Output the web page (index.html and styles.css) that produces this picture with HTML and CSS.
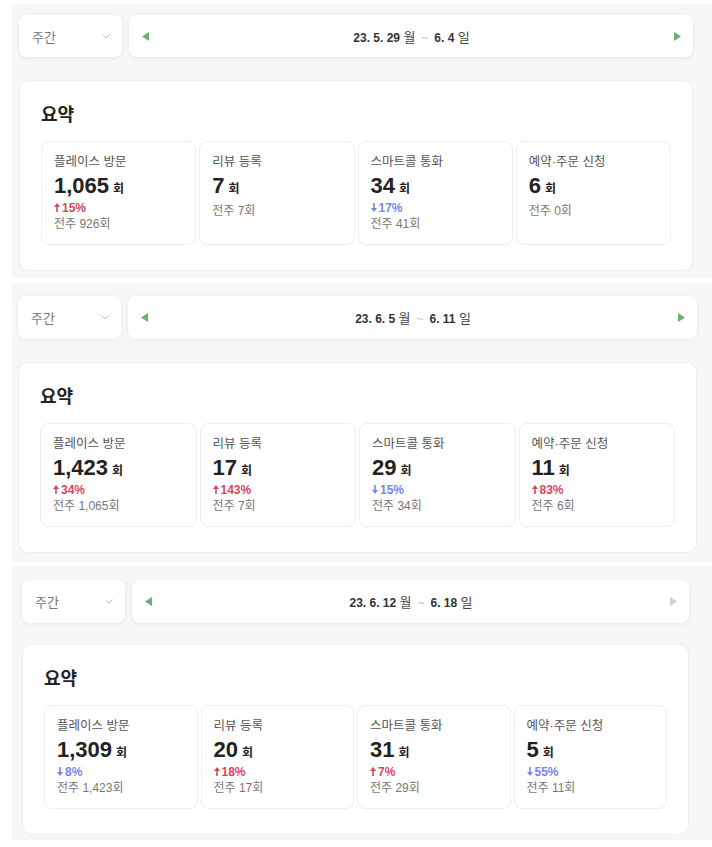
FILE: index.html
```html
<!DOCTYPE html>
<html lang="ko">
<head>
    <meta charset="UTF-8">
    <meta name="viewport" content="width=device-width, initial-scale=1.0">
    <title>주간 요약</title>
    <link rel="stylesheet" href="styles.css">
</head>
<body>
    <!-- 5/29 ~ 6/4 -->
    <section class="week">
        <div class="toolbar">
            <div class="period-select">
                <span>주간</span>
                <svg class="chevron" width="8" height="5" viewBox="0 0 8 5"><polyline points="0.5,0.5 4,4 7.5,0.5" /></svg>
            </div>
            <div class="date-nav">
                <svg class="nav-arrow" width="7" height="9" viewBox="0 0 7 9"><polygon points="7,0 7,9 0,4.5" /></svg>
                <div class="date-range"><b>23. 5. 29</b> <span class="dow">월</span><span class="tilde">~</span><b>6. 4</b> <span class="dow">일</span></div>
                <svg class="nav-arrow" width="7" height="9" viewBox="0 0 7 9"><polygon points="0,0 0,9 7,4.5" /></svg>
            </div>
        </div>
        <div class="summary">
            <h2>요약</h2>
            <div class="stats">
                <div class="stat">
                    <div class="label">플레이스 방문</div>
                    <div class="value">1,065<small>회</small></div>
                    <div class="change up"><svg width="6" height="9" viewBox="0 0 6 9"><polygon points="3,0 6,4 3.8,4 3.8,9 2.2,9 2.2,4 0,4" /></svg>15%</div>
                    <div class="prev">전주 926회</div>
                </div>
                <div class="stat">
                    <div class="label">리뷰 등록</div>
                    <div class="value">7<small>회</small></div>
                    <div class="prev">전주 7회</div>
                </div>
                <div class="stat">
                    <div class="label">스마트콜 통화</div>
                    <div class="value">34<small>회</small></div>
                    <div class="change down"><svg width="6" height="9" viewBox="0 0 6 9"><polygon points="3,9 6,5 3.8,5 3.8,0 2.2,0 2.2,5 0,5" /></svg>17%</div>
                    <div class="prev">전주 41회</div>
                </div>
                <div class="stat">
                    <div class="label">예약·주문 신청</div>
                    <div class="value">6<small>회</small></div>
                    <div class="prev">전주 0회</div>
                </div>
            </div>
        </div>
    </section>

    <!-- 6/5 ~ 6/11 -->
    <section class="week week-b">
        <div class="toolbar">
            <div class="period-select">
                <span>주간</span>
                <svg class="chevron" width="8" height="5" viewBox="0 0 8 5"><polyline points="0.5,0.5 4,4 7.5,0.5" /></svg>
            </div>
            <div class="date-nav">
                <svg class="nav-arrow" width="7" height="9" viewBox="0 0 7 9"><polygon points="7,0 7,9 0,4.5" /></svg>
                <div class="date-range"><b>23. 6. 5</b> <span class="dow">월</span><span class="tilde">~</span><b>6. 11</b> <span class="dow">일</span></div>
                <svg class="nav-arrow" width="7" height="9" viewBox="0 0 7 9"><polygon points="0,0 0,9 7,4.5" /></svg>
            </div>
        </div>
        <div class="summary">
            <h2>요약</h2>
            <div class="stats">
                <div class="stat">
                    <div class="label">플레이스 방문</div>
                    <div class="value">1,423<small>회</small></div>
                    <div class="change up"><svg width="6" height="9" viewBox="0 0 6 9"><polygon points="3,0 6,4 3.8,4 3.8,9 2.2,9 2.2,4 0,4" /></svg>34%</div>
                    <div class="prev">전주 1,065회</div>
                </div>
                <div class="stat">
                    <div class="label">리뷰 등록</div>
                    <div class="value">17<small>회</small></div>
                    <div class="change up"><svg width="6" height="9" viewBox="0 0 6 9"><polygon points="3,0 6,4 3.8,4 3.8,9 2.2,9 2.2,4 0,4" /></svg>143%</div>
                    <div class="prev">전주 7회</div>
                </div>
                <div class="stat">
                    <div class="label">스마트콜 통화</div>
                    <div class="value">29<small>회</small></div>
                    <div class="change down"><svg width="6" height="9" viewBox="0 0 6 9"><polygon points="3,9 6,5 3.8,5 3.8,0 2.2,0 2.2,5 0,5" /></svg>15%</div>
                    <div class="prev">전주 34회</div>
                </div>
                <div class="stat">
                    <div class="label">예약·주문 신청</div>
                    <div class="value">11<small>회</small></div>
                    <div class="change up"><svg width="6" height="9" viewBox="0 0 6 9"><polygon points="3,0 6,4 3.8,4 3.8,9 2.2,9 2.2,4 0,4" /></svg>83%</div>
                    <div class="prev">전주 6회</div>
                </div>
            </div>
        </div>
    </section>

    <!-- 6/12 ~ 6/18 (이번 주, 다음 버튼 비활성) -->
    <section class="week week-c">
        <div class="toolbar">
            <div class="period-select">
                <span>주간</span>
                <svg class="chevron" width="8" height="5" viewBox="0 0 8 5"><polyline points="0.5,0.5 4,4 7.5,0.5" /></svg>
            </div>
            <div class="date-nav">
                <svg class="nav-arrow" width="7" height="9" viewBox="0 0 7 9"><polygon points="7,0 7,9 0,4.5" /></svg>
                <div class="date-range"><b>23. 6. 12</b> <span class="dow">월</span><span class="tilde">~</span><b>6. 18</b> <span class="dow">일</span></div>
                <svg class="nav-arrow disabled" width="7" height="9" viewBox="0 0 7 9"><polygon points="0,0 0,9 7,4.5" /></svg>
            </div>
        </div>
        <div class="summary">
            <h2>요약</h2>
            <div class="stats">
                <div class="stat">
                    <div class="label">플레이스 방문</div>
                    <div class="value">1,309<small>회</small></div>
                    <div class="change down"><svg width="6" height="9" viewBox="0 0 6 9"><polygon points="3,9 6,5 3.8,5 3.8,0 2.2,0 2.2,5 0,5" /></svg>8%</div>
                    <div class="prev">전주 1,423회</div>
                </div>
                <div class="stat">
                    <div class="label">리뷰 등록</div>
                    <div class="value">20<small>회</small></div>
                    <div class="change up"><svg width="6" height="9" viewBox="0 0 6 9"><polygon points="3,0 6,4 3.8,4 3.8,9 2.2,9 2.2,4 0,4" /></svg>18%</div>
                    <div class="prev">전주 17회</div>
                </div>
                <div class="stat">
                    <div class="label">스마트콜 통화</div>
                    <div class="value">31<small>회</small></div>
                    <div class="change up"><svg width="6" height="9" viewBox="0 0 6 9"><polygon points="3,0 6,4 3.8,4 3.8,9 2.2,9 2.2,4 0,4" /></svg>7%</div>
                    <div class="prev">전주 29회</div>
                </div>
                <div class="stat">
                    <div class="label">예약·주문 신청</div>
                    <div class="value">5<small>회</small></div>
                    <div class="change down"><svg width="6" height="9" viewBox="0 0 6 9"><polygon points="3,9 6,5 3.8,5 3.8,0 2.2,0 2.2,5 0,5" /></svg>55%</div>
                    <div class="prev">전주 11회</div>
                </div>
            </div>
        </div>
    </section>
</body>
</html>
```

FILE: styles.css
```css
body {
    margin: 0;
    font-family: "Liberation Sans", "Noto Sans CJK KR", sans-serif;
    background-color: #fff;
    color: #222;
}

/* one week block: toolbar + summary card */
.week {
    background-color: #f6f7f9;
    margin: 4px 0 0 12px;
    padding: 11px 19px 7px 7px;
}
.week-b {
    margin-top: 5px;
    padding: 13px 15px 9px 6px;
}
.week-c {
    margin-top: 4px;
    padding: 14px 23px 5px 10px;
}

.toolbar {
    display: flex;
    gap: 7px;
    height: 42px;
}
.week-b .toolbar,
.week-c .toolbar {
    height: 43px;
}
.period-select {
    width: 103px;
    box-sizing: border-box;
    background-color: #fff;
    border-radius: 8px;
    box-shadow: 0 1px 4px rgba(0, 0, 0, 0.07);
    display: flex;
    align-items: center;
    justify-content: space-between;
    padding: 0 12px 0 13px;
    font-size: 13px;
    color: #777;
}
.chevron polyline {
    fill: none;
    stroke: #c2c2c2;
    stroke-width: 1;
}
.date-nav {
    flex: 1;
    background-color: #fff;
    border-radius: 8px;
    box-shadow: 0 1px 4px rgba(0, 0, 0, 0.07);
    display: flex;
    align-items: center;
    justify-content: space-between;
    padding: 0 12px 0 13px;
}
.nav-arrow polygon {
    fill: #66b26f;
}
.nav-arrow.disabled polygon {
    fill: #cfcfcf;
}
.date-range {
    font-size: 12px;
    color: #333;
}
.date-range b {
    font-weight: bold;
}
.date-range .dow {
    color: #444;
    font-size: 13px;
}
.date-range .tilde {
    color: #c4c4c4;
    margin: 0 6px;
}

.summary {
    margin-top: 23px;
    background-color: #fff;
    border: 1px solid #eceef1;
    border-radius: 10px;
    padding: 23px 21px 25px;
}
.week-c .summary {
    margin-top: 21px;
}
.summary h2 {
    margin: 0 0 15px;
    font-size: 18px;
    line-height: 22px;
    font-weight: bold;
    color: #222;
}

.stats {
    display: grid;
    grid-template-columns: repeat(4, 1fr);
    gap: 3px;
}
.stat {
    height: 104px;
    box-sizing: border-box;
    border: 1px solid #eceef1;
    border-radius: 8px;
    padding: 11px 12px 0;
}
.stat .label {
    font-size: 12.5px;
    line-height: 18px;
    color: #555;
}
.stat .value {
    margin-top: 2px;
    font-size: 22px;
    line-height: 26px;
    font-weight: bold;
    color: #222;
}
.stat .value small {
    font-size: 12px;
    margin-left: 4px;
}
.stat .change {
    font-size: 12px;
    line-height: 13px;
    font-weight: bold;
}
.stat .change svg {
    margin-right: 2px;
}
.change.up {
    color: #d6475d;
}
.change.up polygon {
    fill: #d6475d;
}
.change.down {
    color: #7385f2;
}
.change.down polygon {
    fill: #7385f2;
}
.stat .prev {
    font-size: 12px;
    line-height: 18px;
    color: #777;
}
```
